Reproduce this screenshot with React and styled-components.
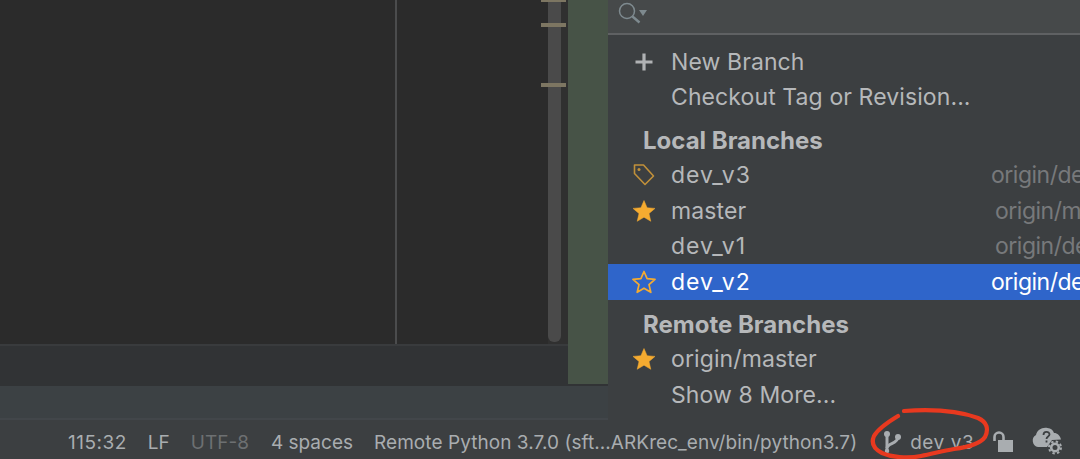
import React from "react";
import styled, { createGlobalStyle } from "styled-components";

const GlobalStyle = createGlobalStyle`
  html, body {
    margin: 0;
    padding: 0;
    background: #3c3f41;
  }
  * {
    box-sizing: border-box;
  }
`;

const Page = styled.div`
  position: relative;
  display: flex;
  flex-direction: column;
  width: 1080px;
  height: 459px;
  overflow: hidden;
  font-family: Inter, "Liberation Sans", sans-serif;
`;

const Workspace = styled.div`
  display: flex;
  height: 386px;
  background: #313335;
`;

const EditorColumn = styled.div`
  display: flex;
  flex-direction: column;
  width: 568px;
`;

const Editor = styled.div`
  display: flex;
  height: 346px;
  background: #2b2b2b;
  border-bottom: 2px solid #393b3d;
`;

const CodePane = styled.div`
  width: 397px;
  border-right: 2px solid #4b4c4d;
`;

const CodeFill = styled.div`
  flex: 1;
`;

const Stripe = styled.div`
  position: relative;
  width: 27px;
  padding: 0 7px;
  background: linear-gradient(90deg, #2b2b2b 7px, #303030 7px);
`;

const Thumb = styled.div`
  height: 342px;
  background: #4a4a4a;
  border-radius: 0 0 6px 6px;
`;

const Mark = styled.div`
  position: absolute;
  left: 0;
  top: ${({ $top }) => $top}px;
  width: 25px;
  height: 4px;
  background: #7d7662;
`;

const Preview = styled.div`
  width: 40px;
  height: 384px;
  background: #475347;
`;

const ToolStrip = styled.div`
  height: 34px;
  background: #3c4144;
  border-bottom: 2px solid #42464a;
`;

const StatusBar = styled.div`
  display: flex;
  align-items: center;
  height: 39px;
  padding: 5px 0 0 68px;
  background: #3c3f41;
  color: #a9adb0;
  font-size: 19px;
`;

const StatusItem = styled.span`
  margin-right: ${({ $gap }) => $gap}px;
  color: ${({ $muted }) => ($muted ? "#6d7072" : "inherit")};
  letter-spacing: ${({ $spread }) => $spread || 0}px;
  white-space: nowrap;
`;

const StatusIcon = styled.svg`
  flex: none;
  margin-right: ${({ $gap }) => $gap}px;
`;

const Popup = styled.div`
  position: absolute;
  top: 0;
  left: 608px;
  width: 472px;
  height: 420px;
  background: #3c3f41;
`;

const SearchBar = styled.div`
  display: flex;
  align-items: flex-start;
  height: 35px;
  margin-bottom: 9px;
  padding-left: 10px;
  background: #46494a;
  border-bottom: 2px solid #5f6163;
`;

const Row = styled.div`
  display: flex;
  align-items: center;
  height: 35.6px;
  padding-left: 24px;
  background: ${({ $selected }) => ($selected ? "#2f65ca" : "transparent")};
  color: ${({ $selected }) => ($selected ? "#ffffff" : "#b6b8ba")};
  font-size: 23px;
  letter-spacing: 0.1px;
  white-space: nowrap;
`;

const RowIcon = styled.div`
  display: flex;
  align-items: center;
  justify-content: center;
  flex: none;
  width: 24px;
  height: 24px;
  margin-right: 15px;
`;

const RowLabel = styled.span`
  flex: 1;
  letter-spacing: ${({ $branch }) => ($branch ? 1 : 0.1)}px;
`;

const Remote = styled.span`
  width: ${({ $wide }) => ($wide ? 89 : 85)}px;
  overflow: hidden;
  color: ${({ $selected }) => ($selected ? "#ffffff" : "#77797b")};
  letter-spacing: -0.5px;
`;

const GroupTitle = styled.div`
  display: flex;
  align-items: center;
  height: 42px;
  padding: 8px 0 0 35px;
  color: #b6b8ba;
  font-size: 24px;
  font-weight: 700;
`;

const Scribble = styled.svg`
  position: absolute;
  left: 860px;
  top: 400px;
  pointer-events: none;
`;

const StarIcon = ({ filled }) => (
  <svg width="24" height="24" viewBox="0 0 24 24">
    <path
      d="M12 1.5l3.1 7.2 7.9.7-6 5.2 1.8 7.7L12 18.2 5.2 22.3 7 14.6 1 9.4l7.9-.7z"
      fill={filled ? "#f5ab30" : "none"}
      stroke="#f5ab30"
      strokeWidth={filled ? 0.5 : 1.7}
      strokeLinejoin="round"
    />
  </svg>
);

const PlusIcon = () => (
  <svg width="20" height="20" viewBox="0 0 20 20">
    <path d="M10 1.5v17M1.5 10h17" stroke="#b0b2b4" strokeWidth="3.2" />
  </svg>
);

const TagIcon = () => (
  <svg width="24" height="24" viewBox="0 0 24 24">
    <path
      d="M2.5 2h9l10 11-8.5 8.5L2.5 10.5z"
      fill="none"
      stroke="#c0903a"
      strokeWidth="1.6"
      strokeLinejoin="round"
    />
    <circle cx="7" cy="6.5" r="1.5" fill="#c0903a" />
  </svg>
);

const SearchIcon = () => (
  <svg width="30" height="25" viewBox="0 0 30 25">
    <circle cx="9" cy="11" r="7.5" fill="none" stroke="#7e8a8f" strokeWidth="1.5" />
    <path d="M14.5 16.5l7 6" stroke="#7e8a8f" strokeWidth="2.4" />
    <path d="M21 10h8l-4 6z" fill="#7e8a8f" />
  </svg>
);

function App() {
  return (
    <Page>
      <GlobalStyle />
      <Workspace>
        <EditorColumn>
          <Editor>
            <CodePane />
            <CodeFill />
            <Stripe>
              <Thumb />
              <Mark $top={-2} />
              <Mark $top={23} />
              <Mark $top={83} />
            </Stripe>
          </Editor>
        </EditorColumn>
        <Preview />
      </Workspace>
      <ToolStrip />
      <StatusBar>
        <StatusItem $gap={21} $spread={0.5}>115:32</StatusItem>
        <StatusItem $gap={21}>LF</StatusItem>
        <StatusItem $gap={22} $muted>UTF-8</StatusItem>
        <StatusItem $gap={21}>4 spaces</StatusItem>
        <StatusItem $gap={25} $spread={0.06}>Remote Python 3.7.0 (sft...ARKrec_env/bin/python3.7)</StatusItem>
        <StatusIcon $gap={8} width="20" height="22" viewBox="0 0 20 22">
          <g fill="none" stroke="#a9adb0" strokeWidth="3">
            <path d="M5 3v17" />
            <path d="M16 6c0 7-11 6-11 11" />
          </g>
          <circle cx="5" cy="3" r="3" fill="#a9adb0" />
          <circle cx="16" cy="6" r="3" fill="#a9adb0" />
          <circle cx="5" cy="20" r="2.2" fill="#a9adb0" />
        </StatusIcon>
        <StatusItem $gap={18} $spread={0.5}>dev_v3</StatusItem>
        <StatusIcon $gap={18} width="22" height="22" viewBox="0 0 22 22">
          <path d="M2.5 10V6a4.5 4.5 0 0 1 9 0v5" fill="none" stroke="#a9adb0" strokeWidth="2.6" />
          <rect x="6" y="9" width="15" height="12" fill="#a9adb0" />
        </StatusIcon>
        <StatusIcon $gap={0} width="32" height="30" viewBox="0 0 32 30">
          <path
            d="M6 20a6.5 6.5 0 0 1-2-12C5 3 10 0 15.5 1c3.5.5 5.5 2 6.5 5 3.5 0 6 2.5 7 6.5l-9 .5-5 7z"
            fill="#a9adb0"
          />
          <path
            d="M11.5 8c0-4 6-4 6-.5 0 2-3 2-3 4.5M14.5 13.5v2"
            fill="none"
            stroke="#3c3f41"
            strokeWidth="1.8"
          />
          <circle cx="23" cy="20.5" r="3.8" fill="none" stroke="#a9adb0" strokeWidth="2.6" />
          <circle
            cx="23"
            cy="20.5"
            r="6"
            fill="none"
            stroke="#a9adb0"
            strokeWidth="2"
            strokeDasharray="2.4 2.31"
          />
        </StatusIcon>
      </StatusBar>
      <Popup>
        <SearchBar>
          <SearchIcon />
        </SearchBar>
        <Row>
          <RowIcon><PlusIcon /></RowIcon>
          <RowLabel>New Branch</RowLabel>
        </Row>
        <Row>
          <RowIcon />
          <RowLabel>Checkout Tag or Revision...</RowLabel>
        </Row>
        <GroupTitle>Local Branches</GroupTitle>
        <Row>
          <RowIcon><TagIcon /></RowIcon>
          <RowLabel $branch>dev_v3</RowLabel>
          <Remote $wide>origin/dev_v3</Remote>
        </Row>
        <Row>
          <RowIcon><StarIcon filled /></RowIcon>
          <RowLabel>master</RowLabel>
          <Remote>origin/master</Remote>
        </Row>
        <Row>
          <RowIcon />
          <RowLabel $branch>dev_v1</RowLabel>
          <Remote>origin/dev_v1</Remote>
        </Row>
        <Row $selected>
          <RowIcon><StarIcon /></RowIcon>
          <RowLabel $branch>dev_v2</RowLabel>
          <Remote $wide $selected>origin/dev_v2</Remote>
        </Row>
        <GroupTitle>Remote Branches</GroupTitle>
        <Row>
          <RowIcon><StarIcon filled /></RowIcon>
          <RowLabel>origin/master</RowLabel>
        </Row>
        <Row>
          <RowIcon />
          <RowLabel>Show 8 More...</RowLabel>
        </Row>
      </Popup>
      <Scribble width="220" height="59" viewBox="0 0 220 59">
        <g fill="none" stroke="#e8391f" strokeWidth="4.2" strokeLinecap="round">
          <path d="M44 11c28-2 55 0 74 7 9 4 11 11 7 19-5 7-16 10-31 12-12 2-22 5-33 7-14 3-30 1-39-3-8-4-11-10-8-17 4-7 14-14 24-20" />
        </g>
      </Scribble>
    </Page>
  );
}

export default App;
